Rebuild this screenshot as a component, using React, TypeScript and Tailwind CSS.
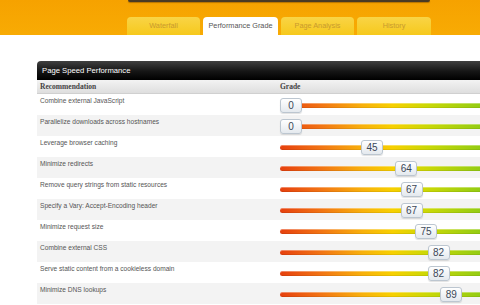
const tabs = [
  { label: 'Waterfall', width: 'w-[73px]', active: false },
  { label: 'Performance Grade', width: 'w-[75px]', active: true },
  { label: 'Page Analysis', width: 'w-[73px]', active: false },
  { label: 'History', width: 'w-[74px]', active: false },
]

const rows = [
  { name: 'Combine external JavaScript', grade: 0 },
  { name: 'Parallelize downloads across hostnames', grade: 0 },
  { name: 'Leverage browser caching', grade: 45 },
  { name: 'Minimize redirects', grade: 64 },
  { name: 'Remove query strings from static resources', grade: 67 },
  { name: 'Specify a Vary: Accept-Encoding header', grade: 67 },
  { name: 'Minimize request size', grade: 75 },
  { name: 'Combine external CSS', grade: 82 },
  { name: 'Serve static content from a cookieless domain', grade: 82 },
  { name: 'Minimize DNS lookups', grade: 89 },
]

export default function App() {
  return (
    <div className="w-[480px] h-[305px] overflow-hidden bg-white font-['Liberation_Sans',Arial,sans-serif]">
      {/* Orange top band */}
      <div className="h-[35px] bg-[linear-gradient(to_bottom,#f6a200,#f8ab04)] flex flex-col">
        <div className="ml-[128px] w-[302px] h-[2px] bg-[#4a3a24] rounded-b-[2px] shadow-[0_1px_1px_rgba(120,70,0,0.5)]" />
        <div className="mt-[15px] ml-[127px] flex gap-[3px]">
          {tabs.map((t) => (
            <div
              key={t.label}
              className={`${t.width} h-[18px] rounded-t-[4px] flex items-center justify-center text-[7.3px] ${
                t.active
                  ? 'bg-white text-[#555]'
                  : 'bg-[linear-gradient(to_bottom,#f9d446,#f6c91c)] text-[#c99a2e]'
              }`}
            >
              {t.label}
            </div>
          ))}
        </div>
      </div>

      {/* Panel */}
      <div className="mt-[26px] ml-[37px] w-[460px]">
        <div className="h-[19px] rounded-tl-[4px] bg-[linear-gradient(to_bottom,#404040,#151515_55%,#000)] flex items-center pl-[5px] text-[7.7px] text-white">
          Page Speed Performance
        </div>
        <div className="h-[14px] flex items-center bg-[linear-gradient(to_bottom,#f3f3f3,#dedede)] border-b border-[#d0d0d0] font-['Liberation_Serif',serif] font-bold text-[7.5px] text-[#444]">
          <div className="w-[243px] pl-[3px]">Recommendation</div>
          <div>Grade</div>
        </div>
        {rows.map((r, i) => (
          <div key={r.name} className={`h-[21px] flex ${i % 2 === 1 ? 'bg-[#f3f3f3]' : 'bg-white'}`}>
            <div className="w-[243px] pl-[3px] pt-[3px] text-[6.6px] leading-[8px] text-[#555]">{r.name}</div>
            <div className="relative flex-1">
              <div className="absolute left-0 top-[9px] w-[205px] h-[5px] rounded-l-full bg-[linear-gradient(to_right,#e6400e,#f27414_20%,#f8b00c_40%,#f7d000_55%,#cad806_72%,#8fcb14)] shadow-[inset_0_1px_0_rgba(255,255,255,0.35),inset_0_-1px_0_rgba(0,0,0,0.08)]" />
              <div
                className="absolute top-[4px] w-[22px] h-[15px] rounded-[3px] border border-[#bcc6d0] bg-[linear-gradient(to_bottom,#ffffff,#e4e9ee)] shadow-[0_1px_1px_rgba(0,0,0,0.12)] flex items-center justify-center text-[10px] text-[#3c4858]"
                style={{ left: r.grade * 1.8 }}
              >
                {r.grade}
              </div>
            </div>
          </div>
        ))}
      </div>
    </div>
  )
}
